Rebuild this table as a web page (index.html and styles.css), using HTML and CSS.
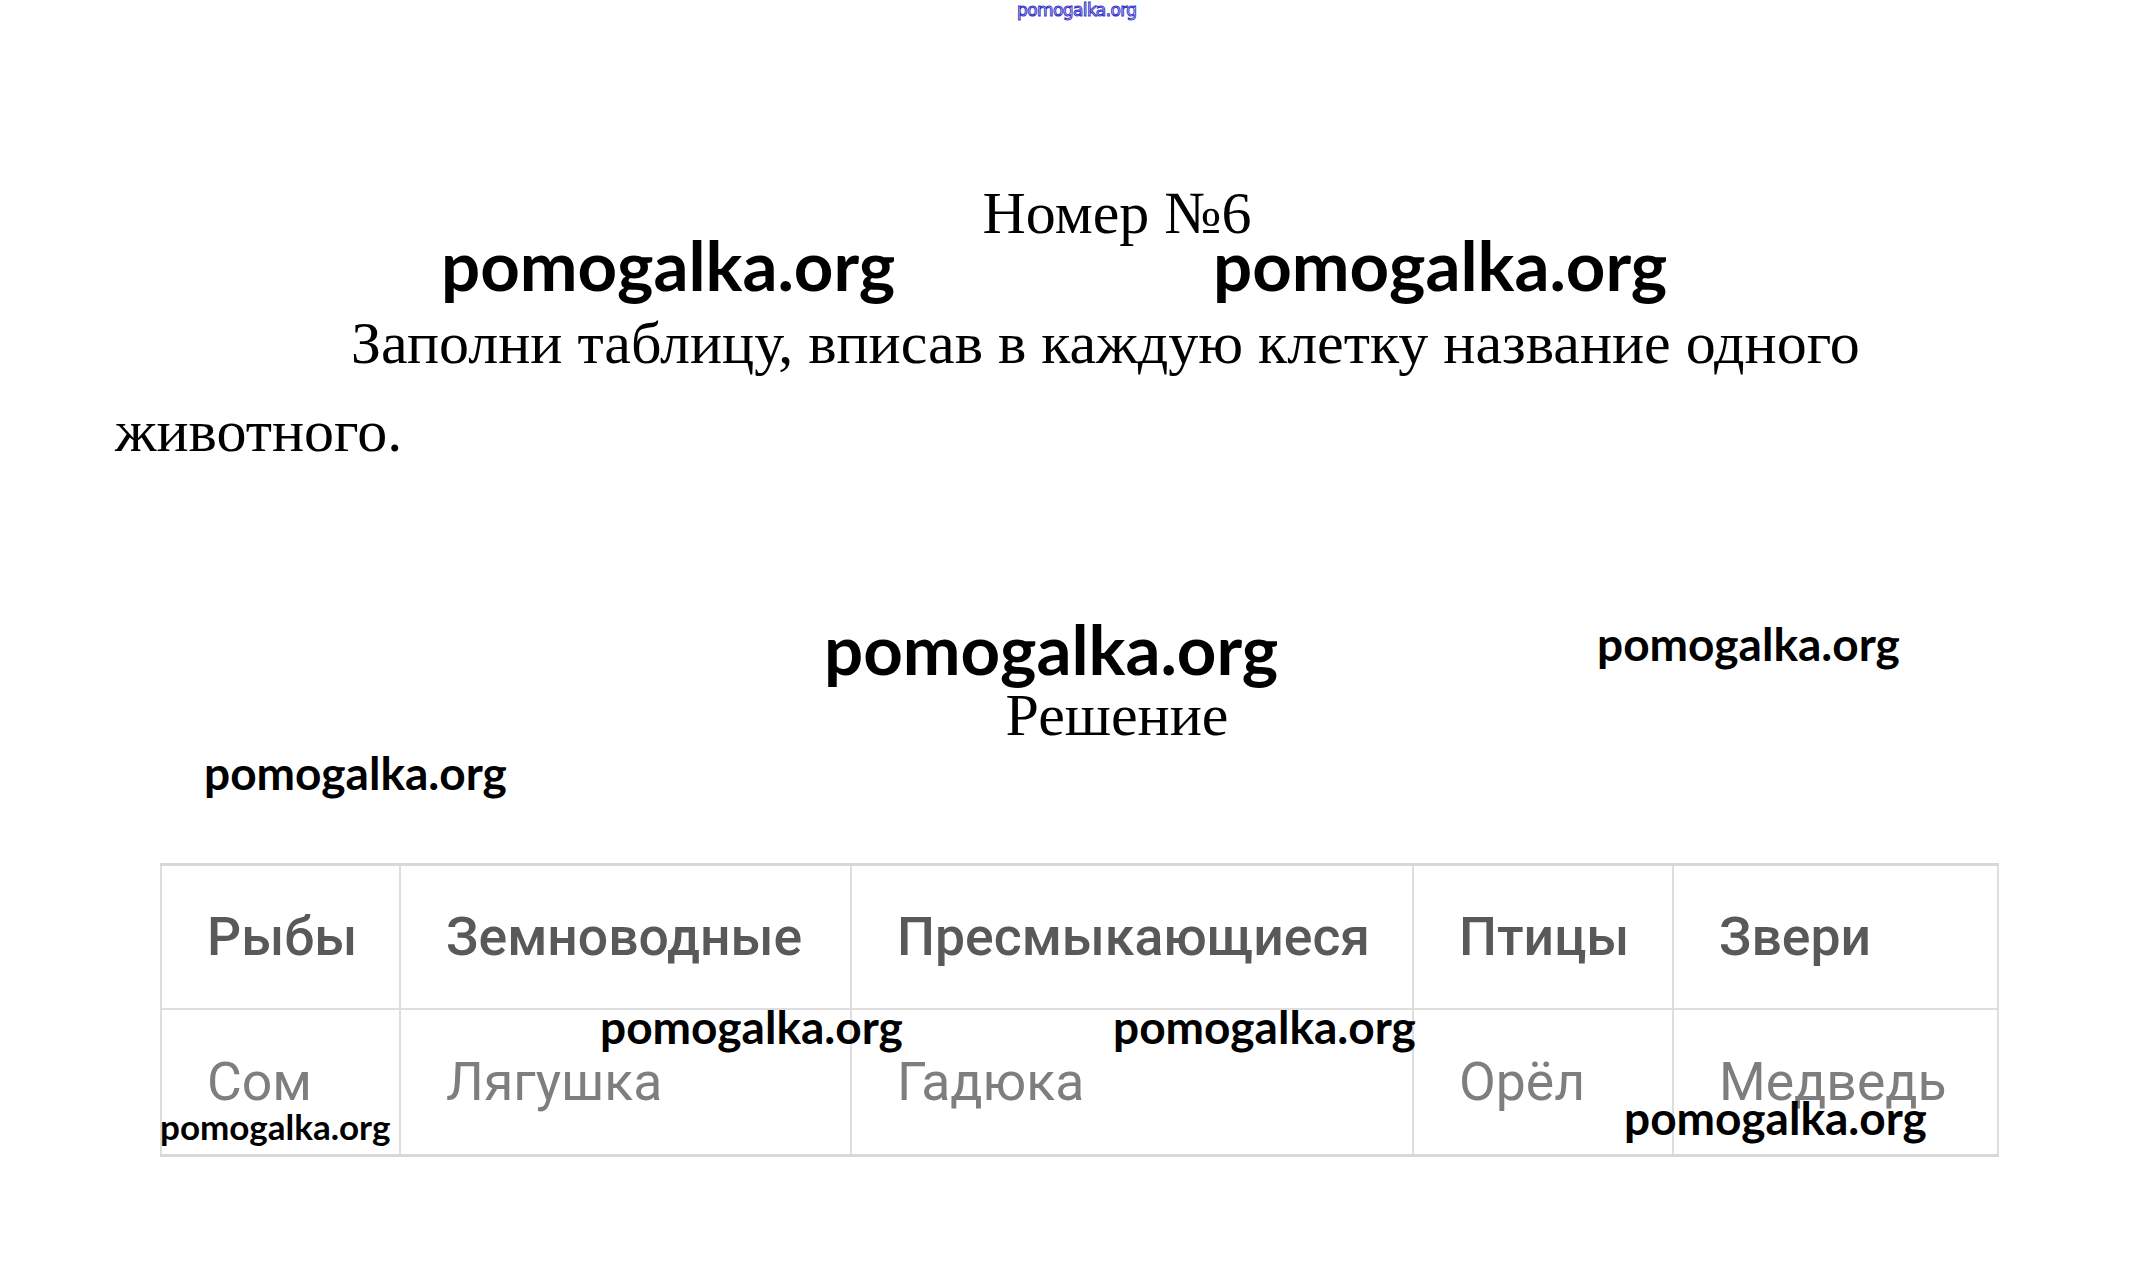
FILE: index.html
```html
<!DOCTYPE html>
<html lang="ru">
<head>
<meta charset="utf-8">
<title>Номер №6</title>
<link rel="stylesheet" href="styles.css">
</head>
<body>
<div class="page">
  <h1 class="title">Номер №6</h1>
  <p class="task">Заполни таблицу, вписав в каждую клетку название одного животного.</p>
  <h2 class="title solution">Решение</h2>
  <table class="grid">
    <colgroup>
      <col class="c1"><col class="c2"><col class="c3"><col class="c4"><col class="c5">
    </colgroup>
    <thead>
      <tr><th>Рыбы</th><th>Земноводные</th><th>Пресмыкающиеся</th><th>Птицы</th><th>Звери</th></tr>
    </thead>
    <tbody>
      <tr><td>Сом</td><td>Лягушка</td><td>Гадюка</td><td>Орёл</td><td>Медведь</td></tr>
    </tbody>
  </table>
</div>
<div class="marks">
  <span class="mark tiny-top">pomogalka.org</span>
  <span class="mark big m1">pomogalka.org</span>
  <span class="mark big m2">pomogalka.org</span>
  <span class="mark big m3">pomogalka.org</span>
  <span class="mark mid m4">pomogalka.org</span>
  <span class="mark mid m5">pomogalka.org</span>
  <span class="mark mid m6">pomogalka.org</span>
  <span class="mark mid m7">pomogalka.org</span>
  <span class="mark small m8">pomogalka.org</span>
  <span class="mark mid m9">pomogalka.org</span>
</div>
</body>
</html>
```
FILE: styles.css
```css
html, body {
  margin: 0;
  padding: 0;
  background: #ffffff;
}
body {
  position: relative;
  width: 2149px;
  min-height: 1284px;
  overflow: hidden;
  font-family: "Liberation Serif", "Times New Roman", serif;
  color: #000;
}
.page {
  margin-left: 115px;
  width: 2004px;
  padding-top: 179px;
}
.title {
  margin: 0;
  font-weight: normal;
  font-size: 60px;
  line-height: 69px;
  text-align: center;
}
.task {
  margin: 51px 0 0 0;
  font-size: 60px;
  line-height: 88px;
  text-indent: 236px;
  width: 1790px;
}
.solution {
  margin-top: 206px;
}
.grid {
  margin: 113px 0 0 45px;
  border-collapse: collapse;
  table-layout: fixed;
  width: 1837px;
  font-family: Roboto, "Liberation Sans", sans-serif;
  font-size: 53.5px;
}
.c1 { width: 239px; }
.c2 { width: 451px; }
.c3 { width: 562px; }
.c4 { width: 260px; }
.c5 { width: 325px; }
.grid th, .grid td {
  border: 2px solid #dedede;
  padding: 0 0 0 45px;
  text-align: left;
  vertical-align: middle;
  white-space: nowrap;
  filter: blur(0.6px);
}
.grid thead tr { height: 144px; }
.grid tbody tr { height: 147px; }
.grid th {
  font-weight: 500;
  color: #595959;
  border-top: 3px solid #d8d8d8;
}
.grid td {
  font-weight: 400;
  color: #7e7e7e;
  border-bottom: 3px solid #d8d8d8;
}
.marks .mark {
  position: absolute;
  font-family: Lato, "Open Sans", sans-serif;
  font-weight: 700;
  line-height: 1.2;
  color: #000;
  white-space: nowrap;
}
.big { font-size: 69px; }
.mid { font-size: 46px; }
.small { font-size: 35px; }
.m1 { left: 441px; top: 224px; }
.m2 { left: 1213px; top: 224px; }
.m3 { left: 824px; top: 608px; }
.m4 { left: 1597px; top: 616px; }
.m5 { left: 204px; top: 745px; }
.m6 { left: 600px; top: 999px; }
.m7 { left: 1113px; top: 999px; }
.m8 { left: 160px; top: 1105px; }
.m9 { left: 1624px; top: 1090px; }
.marks .tiny-top {
  left: 1017px;
  top: 0px;
  font-family: "DejaVu Sans", sans-serif;
  font-weight: 400;
  font-size: 17px;
  line-height: 20px;
  color: transparent;
  -webkit-text-stroke: 1px #3434c8;
  letter-spacing: -0.6px;
}
```
